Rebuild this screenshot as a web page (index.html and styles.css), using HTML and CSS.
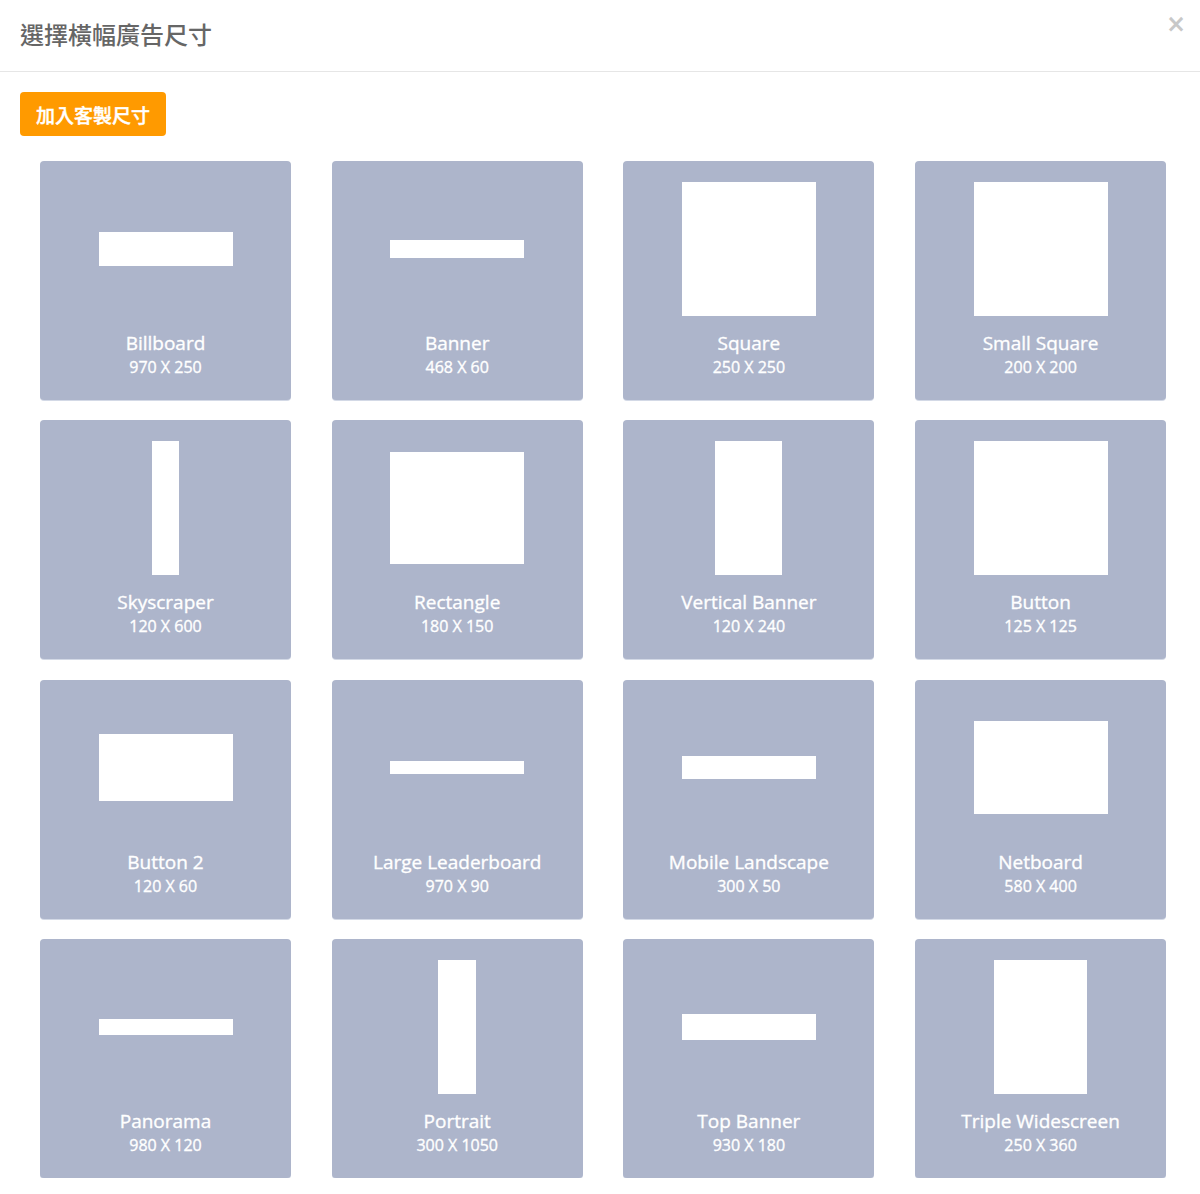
FILE: index.html
```html
<!DOCTYPE html>
<html lang="zh-Hant">
<head>
<meta charset="utf-8">
<title>選擇橫幅廣告尺寸</title>
<link rel="stylesheet" href="styles.css">
</head>
<body>
<div class="modal">
  <header class="modal-header">
    <h1 class="modal-title">選擇橫幅廣告尺寸</h1>
    <button class="modal-close" type="button" aria-label="close">×</button>
  </header>
  <main class="modal-body">
    <button class="btn-custom" type="button">加入客製尺寸</button>
    <div class="size-grid">
      <div class="size-card"><div class="preview"><span class="shape" style="width:134px;height:34.5px"></span></div><div class="name">Billboard</div><div class="dims">970 X 250</div></div>
      <div class="size-card"><div class="preview"><span class="shape" style="width:134px;height:17.2px"></span></div><div class="name">Banner</div><div class="dims">468 X 60</div></div>
      <div class="size-card"><div class="preview"><span class="shape" style="width:134px;height:134px"></span></div><div class="name">Square</div><div class="dims">250 X 250</div></div>
      <div class="size-card"><div class="preview"><span class="shape" style="width:134px;height:134px"></span></div><div class="name">Small Square</div><div class="dims">200 X 200</div></div>

      <div class="size-card"><div class="preview"><span class="shape" style="width:26.8px;height:134px"></span></div><div class="name">Skyscraper</div><div class="dims">120 X 600</div></div>
      <div class="size-card"><div class="preview"><span class="shape" style="width:134px;height:111.7px"></span></div><div class="name">Rectangle</div><div class="dims">180 X 150</div></div>
      <div class="size-card"><div class="preview"><span class="shape" style="width:67px;height:134px"></span></div><div class="name">Vertical Banner</div><div class="dims">120 X 240</div></div>
      <div class="size-card"><div class="preview"><span class="shape" style="width:134px;height:134px"></span></div><div class="name">Button</div><div class="dims">125 X 125</div></div>

      <div class="size-card"><div class="preview"><span class="shape" style="width:134px;height:67px"></span></div><div class="name">Button 2</div><div class="dims">120 X 60</div></div>
      <div class="size-card"><div class="preview"><span class="shape" style="width:134px;height:12.4px"></span></div><div class="name">Large Leaderboard</div><div class="dims">970 X 90</div></div>
      <div class="size-card"><div class="preview"><span class="shape" style="width:134px;height:22.3px"></span></div><div class="name">Mobile Landscape</div><div class="dims">300 X 50</div></div>
      <div class="size-card"><div class="preview"><span class="shape" style="width:134px;height:92.4px"></span></div><div class="name">Netboard</div><div class="dims">580 X 400</div></div>

      <div class="size-card"><div class="preview"><span class="shape" style="width:134px;height:16.4px"></span></div><div class="name">Panorama</div><div class="dims">980 X 120</div></div>
      <div class="size-card"><div class="preview"><span class="shape" style="width:38.3px;height:134px"></span></div><div class="name">Portrait</div><div class="dims">300 X 1050</div></div>
      <div class="size-card"><div class="preview"><span class="shape" style="width:134px;height:25.9px"></span></div><div class="name">Top Banner</div><div class="dims">930 X 180</div></div>
      <div class="size-card"><div class="preview"><span class="shape" style="width:93px;height:134px"></span></div><div class="name">Triple Widescreen</div><div class="dims">250 X 360</div></div>
    </div>
  </main>
</div>
</body>
</html>
```

FILE: styles.css
```css
* { box-sizing: border-box; }

html, body {
  margin: 0;
  padding: 0;
  background: #fff;
}

body {
  font-family: "Open Sans", "Noto Sans CJK TC", sans-serif;
  color: #666;
}

.modal {
  width: 1200px;
}

.modal-header {
  height: 72px;
  padding: 0 20px;
  display: flex;
  align-items: center;
  justify-content: space-between;
  border-bottom: 1px solid #e6e6e6;
}

.modal-title {
  margin: 0 0 4px;
  font-family: "Noto Sans CJK TC", sans-serif;
  font-size: 24px;
  font-weight: 500;
  color: #666;
}

.modal-close {
  align-self: flex-start;
  margin-top: 12px;
  margin-right: -6px;
  padding: 0;
  border: 0;
  background: none;
  font-family: "DejaVu Sans", sans-serif;
  font-size: 24px;
  font-weight: bold;
  line-height: 1;
  color: #c8c8c8;
  cursor: pointer;
}

.modal-body {
  padding: 20px 20px 0;
}

.btn-custom {
  display: block;
  height: 44px;
  padding: 0 16px;
  border: 0;
  border-radius: 4px;
  background: #ff9a00;
  color: #fff;
  font-family: "Noto Sans CJK TC", sans-serif;
  font-size: 19px;
  font-weight: 500;
  -webkit-text-stroke: 0.4px #fff;
  cursor: pointer;
}

.size-grid {
  margin: 25px 0 0 20px;
  width: 1126px;
  display: grid;
  grid-template-columns: repeat(4, 251px);
  column-gap: 40.7px;
  row-gap: 20.3px;
}

.size-card {
  height: 239px;
  padding-top: 21px;
  border-radius: 4px;
  background: #adb5cb;
  box-shadow: 0 1px 0 #d3d9e6;
  color: #fff;
  text-align: center;
  font-weight: 400;
  -webkit-text-stroke: 0.35px #fff;
}

.preview {
  height: 134px;
  display: flex;
  align-items: center;
  justify-content: center;
}

.shape {
  display: block;
  background: #fff;
}

.name {
  margin-top: 15px;
  font-size: 19px;
  line-height: 24px;
}

.dims {
  margin-top: 1px;
  font-size: 16px;
  line-height: 22px;
}
```
